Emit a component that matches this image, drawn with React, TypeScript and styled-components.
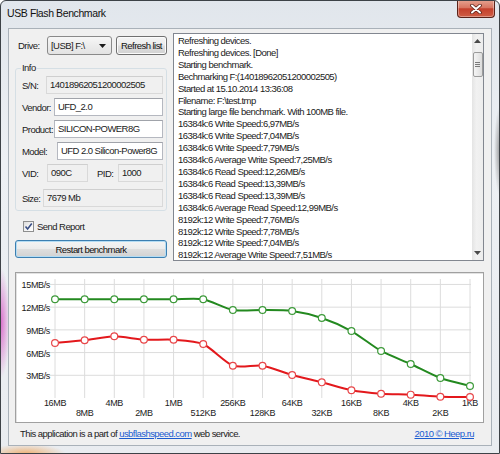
import React from "react";
import styled, { createGlobalStyle } from "styled-components";

const GlobalStyle = createGlobalStyle`
  html, body {
    margin: 0;
    padding: 0;
    background: #ffffff;
  }
  body {
    font-family: "Liberation Sans", Arial, sans-serif;
    font-size: 9.5px;
    letter-spacing: -0.55px;
    color: #1b1b1b;
  }
  * {
    box-sizing: border-box;
  }
`;

const Window = styled.div`
  width: 500px;
  height: 454px;
  border: 1px solid #3d4247;
  border-radius: 6px 6px 0 0;
  background: radial-gradient(ellipse 9px 55px at 0px 322px, rgba(214, 84, 196, 0.8), rgba(214, 84, 196, 0)),
    radial-gradient(ellipse 40px 10px at 25px 453px, rgba(240, 150, 60, 0.7), rgba(240, 150, 60, 0)),
    radial-gradient(ellipse 6px 45px at 499px 150px, rgba(80, 80, 80, 0.55), rgba(80, 80, 80, 0)),
    linear-gradient(180deg, #e1e6ec 0%, #edf0f4 35%, #e9ecf0 100%);
  display: flex;
  flex-direction: column;
  overflow: hidden;
`;

const TitleBar = styled.div`
  height: 27px;
  flex: none;
  display: flex;
  align-items: flex-start;
  padding-left: 6px;
`;

const Title = styled.div`
  font-size: 10.5px;
  letter-spacing: -0.4px;
  line-height: 25px;
  color: #111;
`;

const CloseButton = styled.div`
  margin: -1px 4px 0 auto;
  width: 38px;
  height: 18px;
  border: 1px solid #5a2219;
  border-top: none;
  border-radius: 0 0 4px 4px;
  background: linear-gradient(180deg, #e6a391 0%, #d87662 45%, #c4402c 52%, #cf5d45 100%);
  box-shadow: inset 0 0 0 1px rgba(255, 255, 255, 0.35);
  display: flex;
  align-items: center;
  justify-content: center;
`;

const Client = styled.div`
  flex: 1;
  margin: 0 7px 7px 7px;
  border: 1px solid #a9b1b9;
  background: #f0f0f0;
  display: flex;
  flex-direction: column;
  padding: 4px 7px 0 6px;
`;

const TopRow = styled.div`
  display: grid;
  grid-template-columns: 152px 311px;
  column-gap: 6px;
  height: 228px;
`;

const LeftCol = styled.div`
  display: flex;
  flex-direction: column;
  padding-top: 3px;
`;

const DriveRow = styled.div`
  display: flex;
  align-items: center;
  height: 19px;
`;

const DriveLabel = styled.span`
  width: 32px;
  padding-left: 3px;
  flex: none;
`;

const Combo = styled.div`
  width: 65px;
  height: 19px;
  border: 1px solid #8a8a8a;
  border-radius: 3px;
  background: linear-gradient(180deg, #f7f7f7 0%, #ececec 50%, #e3e3e3 100%);
  display: flex;
  align-items: center;
  justify-content: space-between;
  padding: 0 5px 0 3px;
`;

const Button = styled.button<{ $primary?: boolean }>`
  font: inherit;
  letter-spacing: inherit;
  color: #111;
  padding: 0;
  border: 1px solid ${(p) => (p.$primary ? "#3c7fb1" : "#707070")};
  border-radius: 3px;
  background: linear-gradient(180deg, #f4f4f4 0%, #ececec 48%, #dedede 52%, #d2d2d2 100%);
  box-shadow: inset 0 0 0 1px ${(p) => (p.$primary ? "#b4dcf3" : "#fbfbfb")};
`;

const RefreshButton = styled(Button)`
  margin-left: 4px;
  width: 51px;
  height: 19px;
`;

const InfoBox = styled.fieldset`
  margin: 7px 0 0 0;
  padding: 2px 3px 3px 6px;
  border: 1px solid #d5dfe5;
  border-radius: 3px;
  display: flex;
  flex-direction: column;
  gap: 4px;
`;

const InfoLegend = styled.legend`
  padding: 0 1px;
  margin-left: -1px;
  line-height: 12px;
`;

const Row = styled.div<{ $mt?: number }>`
  display: flex;
  align-items: center;
  height: 18px;
  margin-top: ${(p) => p.$mt ?? 0}px;
`;

const Label = styled.span<{ $w: number; $ml?: number }>`
  width: ${(p) => p.$w}px;
  margin-left: ${(p) => p.$ml ?? 0}px;
  flex: none;
  white-space: nowrap;
`;

const Field = styled.div<{ $readonly?: boolean; $w?: number }>`
  height: 18px;
  ${(p) => (p.$w ? `width: ${p.$w}px; flex: none;` : "flex: 1;")}
  border: 1px solid ${(p) => (p.$readonly ? "#d9d9d9" : "#b5b8c0")};
  border-top-color: ${(p) => (p.$readonly ? "#cfcfcf" : "#a0a3aa")};
  background: ${(p) => (p.$readonly ? "#f0f0f0" : "#ffffff")};
  padding-left: 3px;
  line-height: 16px;
  white-space: nowrap;
  overflow: hidden;
`;

const CheckRow = styled.label`
  display: flex;
  align-items: center;
  height: 13px;
  margin-top: 9px;
  padding-left: 8px;
  gap: 3px;
`;

const CheckBox = styled.span`
  width: 11px;
  height: 11px;
  border: 1px solid #8e8f8f;
  background: linear-gradient(135deg, #dcdcdc 0%, #f6f6f6 60%, #ffffff 100%);
  display: flex;
  align-items: center;
  justify-content: center;
`;

const RestartButton = styled(Button)`
  margin-top: 7px;
  height: 18px;
  width: 100%;
`;

const LogBox = styled.div`
  border: 1px solid #828790;
  background: #ffffff;
  display: flex;
  height: 228px;
`;

const LogText = styled.div`
  flex: 1;
  padding: 1px 0 0 4px;
  line-height: 11.9px;
  overflow: hidden;
  white-space: nowrap;
`;

const ScrollBar = styled.div`
  width: 11px;
  flex: none;
  display: flex;
  flex-direction: column;
  align-items: center;
  background: linear-gradient(90deg, #e4e4e4 0%, #f1f1f1 40%, #ededed 100%);
`;

const ScrollArrow = styled.div`
  height: 14px;
  width: 100%;
  display: flex;
  align-items: center;
  justify-content: center;
`;

const Thumb = styled.div`
  margin-top: 4px;
  width: 10px;
  height: 25px;
  border: 1px solid #9b9b9b;
  border-radius: 2px;
  background: linear-gradient(90deg, #f4f4f4 0%, #e9e9e9 50%, #dcdcdc 100%);
  display: flex;
  align-items: center;
  justify-content: center;
`;

const Track = styled.div`
  flex: 1;
`;

const ChartPanel = styled.div`
  margin-top: 11px;
  height: 151px;
  border: 1px solid #a0a0a0;
  box-shadow: inset 1px 1px 0 #e2e2e2;
  background: #ffffff;
  display: flex;
`;

const AxisText = styled.text`
  font-family: "Liberation Sans", Arial, sans-serif;
  font-size: 9px;
  letter-spacing: -0.35px;
  fill: #1b1b1b;
`;

const Footer = styled.div`
  flex: 1;
  display: flex;
  align-items: center;
  justify-content: space-between;
  padding: 0 10px 2px 5px;
`;

const Link = styled.a`
  color: #1a5bd0;
  text-decoration: underline;
`;

const logLines = [
  "Refreshing devices.",
  "Refreshing devices. [Done]",
  "Starting benchmark.",
  "Bechmarking F:(14018962051200002505)",
  "Started at 15.10.2014 13:36:08",
  "Filename: F:\\test.tmp",
  "Starting large file benchmark. With 100MB file.",
  "16384k:6 Write Speed:6,97MB/s",
  "16384k:6 Write Speed:7,04MB/s",
  "16384k:6 Write Speed:7,79MB/s",
  "16384k:6 Average Write Speed:7,25MB/s",
  "16384k:6 Read Speed:12,26MB/s",
  "16384k:6 Read Speed:13,39MB/s",
  "16384k:6 Read Speed:13,39MB/s",
  "16384k:6 Average Read Speed:12,99MB/s",
  "8192k:12 Write Speed:7,76MB/s",
  "8192k:12 Write Speed:7,78MB/s",
  "8192k:12 Write Speed:7,04MB/s",
  "8192k:12 Average Write Speed:7,51MB/s",
];

const sizes = ["16MB", "8MB", "4MB", "2MB", "1MB", "512KB", "256KB", "128KB", "64KB", "32KB", "16KB", "8KB", "4KB", "2KB", "1KB"];
const writeSpeed = [7.27, 7.62, 8.15, 7.7, 7.7, 7.13, 4.27, 4.27, 3.04, 2.07, 1.02, 0.57, 0.44, 0.17, 0.13];
const readSpeed = [13.04, 13.04, 13.04, 13.04, 13.04, 13.04, 11.62, 11.62, 11.49, 10.57, 8.85, 6.21, 4.49, 2.64, 1.59];

const px = (i: number) => 55 + (i * 415) / 14;
const py = (v: number) => 398 - v * 7.57;

function smoothPath(vals: number[]) {
  const pts = vals.map((v, i) => [px(i), py(v)]);
  let d = `M${pts[0][0]},${pts[0][1]}`;
  const t = 0.12;
  for (let i = 0; i < pts.length - 1; i++) {
    const p0 = pts[i - 1] || pts[i];
    const p1 = pts[i];
    const p2 = pts[i + 1];
    const p3 = pts[i + 2] || p2;
    const c1 = [p1[0] + (p2[0] - p0[0]) * t, p1[1] + (p2[1] - p0[1]) * t];
    const c2 = [p2[0] - (p3[0] - p1[0]) * t, p2[1] - (p3[1] - p1[1]) * t];
    d += ` C${c1[0]},${c1[1]} ${c2[0]},${c2[1]} ${p2[0]},${p2[1]}`;
  }
  return d;
}

const Series = ({ vals, color, marker }: { vals: number[]; color: string; marker: string }) => (
  <g>
    <path d={smoothPath(vals)} fill="none" stroke={color} strokeWidth={2} />
    {vals.map((v, i) => (
      <circle key={i} cx={px(i)} cy={py(v)} r={3.4} fill="#ffffff" stroke={marker} strokeWidth={1.2} />
    ))}
  </g>
);

const Chart = () => (
  <svg width={467} height={149} viewBox="16 273 467 149">
    {sizes.map((_, i) => (
      <line key={i} x1={px(i)} x2={px(i)} y1={279} y2={398} stroke="#dcdcdc" strokeWidth={1} />
    ))}
    {[3, 6, 9, 12, 15].map((v) => (
      <line key={v} x1={50} x2={471} y1={py(v)} y2={py(v)} stroke="#dcdcdc" strokeWidth={1} />
    ))}
    {[15, 12, 9, 6, 3].map((v) => (
      <AxisText key={v} x={50} y={py(v) + 4} textAnchor="end">
        {v}MB/s
      </AxisText>
    ))}
    {sizes.map((s, i) => (
      <AxisText key={s} x={px(i)} y={i % 2 === 0 ? 406 : 416} textAnchor="middle">
        {s}
      </AxisText>
    ))}
    <Series vals={readSpeed} color="#23891f" marker="#3d9a3a" />
    <Series vals={writeSpeed} color="#e3181c" marker="#e8474a" />
  </svg>
);

const App: React.FC = () => {
  return (
    <>
      <GlobalStyle />
      <Window>
        <TitleBar>
          <Title>USB Flash Benchmark</Title>
          <CloseButton>
            <svg width="12" height="10" viewBox="0 0 12 10">
              <path d="M2 1.5 L10 8.5 M10 1.5 L2 8.5" stroke="#5a2219" strokeWidth={3.6} strokeLinecap="round" />
              <path d="M2 1.5 L10 8.5 M10 1.5 L2 8.5" stroke="#ffffff" strokeWidth={2} strokeLinecap="round" />
            </svg>
          </CloseButton>
        </TitleBar>
        <Client>
          <TopRow>
            <LeftCol>
              <DriveRow>
                <DriveLabel>Drive:</DriveLabel>
                <Combo>
                  <span>[USB] F:\</span>
                  <svg width="7" height="4" viewBox="0 0 7 4">
                    <polygon points="0,0 7,0 3.5,4" fill="#1b1b1b" />
                  </svg>
                </Combo>
                <RefreshButton>Refresh list</RefreshButton>
              </DriveRow>
              <InfoBox>
                <InfoLegend>Info</InfoLegend>
                <Row>
                  <Label $w={24}>S/N:</Label>
                  <Field $readonly>14018962051200002505</Field>
                </Row>
                <Row>
                  <Label $w={32}>Vendor:</Label>
                  <Field>UFD_2.0</Field>
                </Row>
                <Row>
                  <Label $w={32}>Product:</Label>
                  <Field>SILICON-POWER8G</Field>
                </Row>
                <Row>
                  <Label $w={35}>Model:</Label>
                  <Field>UFD 2.0 Silicon-Power8G</Field>
                </Row>
                <Row>
                  <Label $w={25}>VID:</Label>
                  <Field $readonly $w={41}>090C</Field>
                  <Label $w={21} $ml={9}>PID:</Label>
                  <Field $readonly>1000</Field>
                </Row>
                <Row $mt={3}>
                  <Label $w={21}>Size:</Label>
                  <Field $readonly>7679 Mb</Field>
                </Row>
              </InfoBox>
              <CheckRow>
                <CheckBox>
                  <svg width="9" height="9" viewBox="0 0 9 9">
                    <path d="M1.5 4.5 L3.6 7 L7.8 1.5" fill="none" stroke="#3a4f85" strokeWidth={1.6} />
                  </svg>
                </CheckBox>
                <span>Send Report</span>
              </CheckRow>
              <RestartButton $primary>Restart benchmark</RestartButton>
            </LeftCol>
            <LogBox>
              <LogText>
                {logLines.map((l, i) => (
                  <div key={i}>{l}</div>
                ))}
              </LogText>
              <ScrollBar>
                <ScrollArrow>
                  <svg width="7" height="4" viewBox="0 0 7 4">
                    <polygon points="0,4 7,4 3.5,0" fill="#4a4a4a" />
                  </svg>
                </ScrollArrow>
                <Thumb>
                  <svg width="5" height="6" viewBox="0 0 5 6">
                    <path d="M0 0.5 H5 M0 2.5 H5 M0 4.5 H5" stroke="#7a7a7a" strokeWidth={1} />
                  </svg>
                </Thumb>
                <Track />
                <ScrollArrow>
                  <svg width="7" height="4" viewBox="0 0 7 4">
                    <polygon points="0,0 7,0 3.5,4" fill="#4a4a4a" />
                  </svg>
                </ScrollArrow>
              </ScrollBar>
            </LogBox>
          </TopRow>
          <ChartPanel>
            <Chart />
          </ChartPanel>
          <Footer>
            <span>
              This application is a part of <Link href="#">usbflashspeed.com</Link> web service.
            </span>
            <Link href="#">2010 © Heep.ru</Link>
          </Footer>
        </Client>
      </Window>
    </>
  );
};

export default App;
